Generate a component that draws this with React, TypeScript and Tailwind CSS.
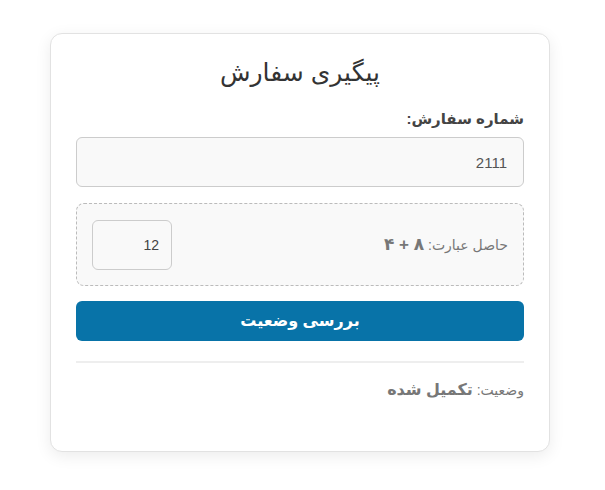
import React, { useState } from 'react';

const App: React.FC = () => {
  const [orderNo, setOrderNo] = useState('2111');
  const [answer, setAnswer] = useState('12');

  return (
    <div
      className="min-h-screen bg-white pt-[33px]"
      style={{ fontFamily: '"Liberation Sans", "DejaVu Sans", sans-serif' }}
    >
      <div
        dir="rtl"
        className="ml-[50px] w-[500px] rounded-xl border border-[#e2e2e2] bg-white px-[25px] pt-[25px] pb-[25px] shadow-[0_4px_16px_rgba(0,0,0,0.08)]"
      >
        <h2 className="text-center text-[25px] leading-[26px] font-normal text-[#333]">پیگیری سفارش</h2>

        {/* Order number */}
        <label className="mt-[24px] block text-[15px] leading-[20px] font-bold text-[#444]">شماره سفارش:</label>
        <input
          value={orderNo}
          onChange={(e) => setOrderNo(e.target.value)}
          className="mt-[8px] block h-[50px] w-full rounded-md border border-[#ccc] bg-[#f9f9f9] px-4 text-right text-[15px] text-[#555] outline-none"
        />

        {/* Captcha */}
        <div className="mt-[16px] flex h-[83px] items-center justify-between rounded-lg border border-dashed border-[#bbb] bg-[#f9f9f9] px-[15px]">
          <span className="text-[14px] text-[#777]">
            حاصل عبارت: <b className="text-[17px] text-[#777]">۸&nbsp;+&nbsp;۴</b>
          </span>
          <input
            value={answer}
            onChange={(e) => setAnswer(e.target.value)}
            className="h-[50px] w-[80px] rounded-md border border-[#ccc] bg-[#f9f9f9] px-3 text-right text-[14px] text-[#444] outline-none"
          />
        </div>

        <button className="mt-[15px] block h-[40px] w-full rounded-md bg-[#0873a8] text-[16px] font-bold text-white">
          بررسی وضعیت
        </button>

        <hr className="mt-[20px] border-t-2 border-[#eee]" />

        <div className="mt-[16px] text-[14px] leading-[22px] text-[#777]">
          وضعیت: <b className="text-[16px] text-[#777]">تکمیل شده</b>
        </div>
        <div className="h-[25px]" />
      </div>
    </div>
  );
};

export default App;
